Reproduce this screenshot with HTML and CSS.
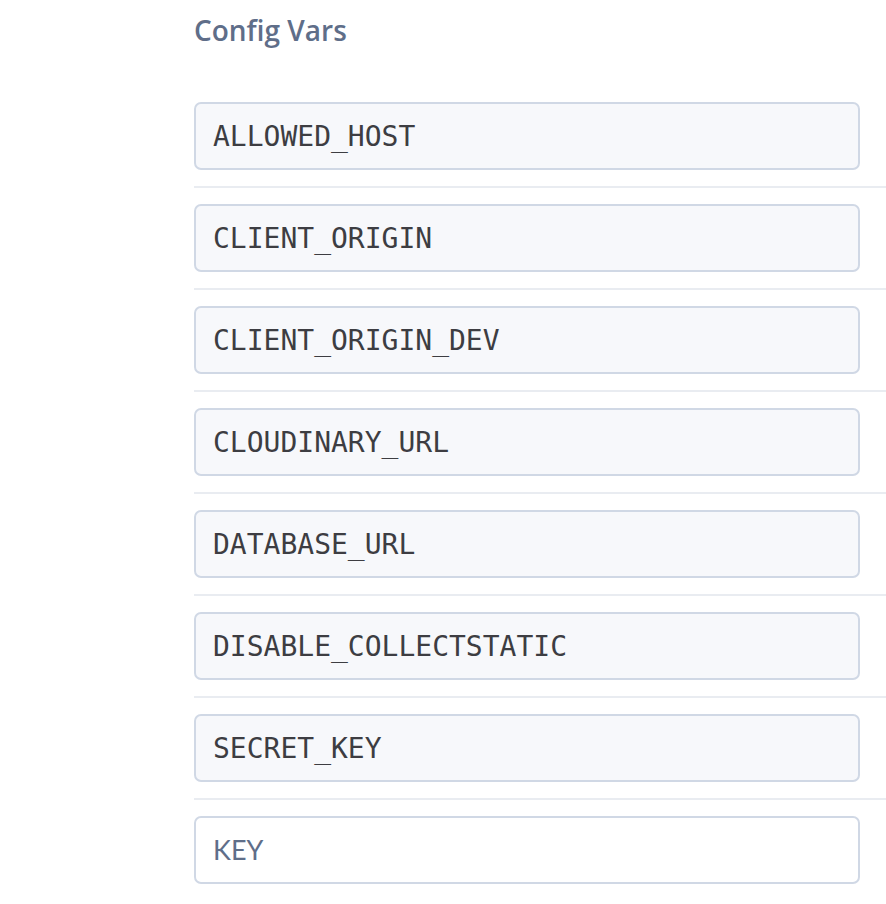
FILE: index.html
```html
<!DOCTYPE html>
<html>
<head>
<meta charset="utf-8">
<link rel="stylesheet" href="styles.css">
</head>
<body>
<div class="page">
  <h2 class="title">Config Vars</h2>
  <div class="list">
    <div class="row"><input class="field" type="text" value="ALLOWED_HOST"></div>
    <div class="row"><input class="field" type="text" value="CLIENT_ORIGIN"></div>
    <div class="row"><input class="field" type="text" value="CLIENT_ORIGIN_DEV"></div>
    <div class="row"><input class="field" type="text" value="CLOUDINARY_URL"></div>
    <div class="row"><input class="field" type="text" value="DATABASE_URL"></div>
    <div class="row"><input class="field" type="text" value="DISABLE_COLLECTSTATIC"></div>
    <div class="row"><input class="field" type="text" value="SECRET_KEY"></div>
    <div class="row last"><input class="field empty" type="text" placeholder="KEY"></div>
  </div>
</div>
</body>
</html>
```
FILE: styles.css
```css
html, body {
  margin: 0;
  padding: 0;
  background: #ffffff;
}
.page {
  padding-left: 194px;
  font-family: "Open Sans", Lato, sans-serif;
}
.title {
  margin: 0;
  padding-top: 12px;
  font-size: 28px;
  line-height: 36px;
  font-weight: 600;
  color: #5f6e89;
}
.list {
  padding-top: 54px;
}
.row {
  padding: 16px 0;
  border-bottom: 2px solid #e9ecf1;
}
.row:first-child {
  padding-top: 0;
}
.row.last {
  border-bottom: none;
}
.field {
  box-sizing: border-box;
  display: block;
  width: 666px;
  height: 68px;
  margin: 0;
  padding: 0 0 0 17px;
  border: 2px solid #d0d8e5;
  border-radius: 7px;
  background: #f7f8fb;
  font-family: "DejaVu Sans Mono", monospace;
  font-size: 28px;
  color: #3d3d42;
  outline: none;
}
.field.empty {
  background: #ffffff;
}
.field::placeholder {
  font-family: Lato, "Open Sans", sans-serif;
  font-size: 27px;
  color: #5f6e89;
  opacity: 1;
}
```
